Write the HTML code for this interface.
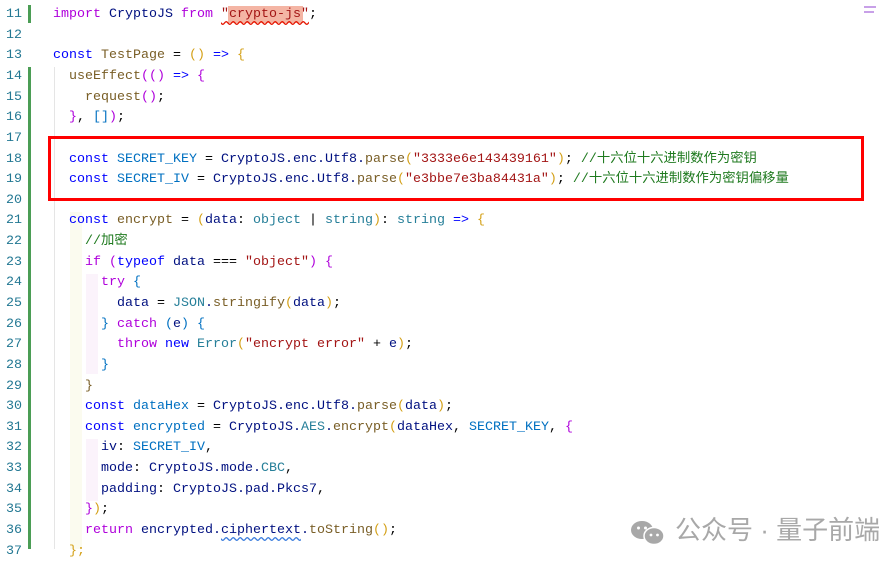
<!DOCTYPE html>
<html><head><meta charset="utf-8"><style>
body{margin:0;width:882px;height:547px;background:#fff;overflow:hidden;position:relative;font-family:"Liberation Mono","Noto Sans CJK SC",monospace;font-size:13.33px}
.l{position:absolute;left:0;height:20.64px;line-height:20.64px;white-space:pre;width:882px}
.n{position:absolute;left:0;width:22px;text-align:right;color:#237893}
.c{position:absolute;left:53px;color:#001080}
.k{color:#0000ff}.p{color:#af00db}.s{color:#a31515}.f{color:#795e26}.t{color:#000}.y{color:#d4a017}.g{color:#1f7a1f}.m{color:#267f99}.b{color:#0431fa}.tc{color:#0070c1}
.bar{position:absolute;left:28px;width:3px;background:#4b9d55}
.sq{text-decoration:underline wavy #e51400;text-underline-offset:3px}
.sqb{text-decoration:underline wavy #3b7ddd;text-underline-offset:3px}
#w{position:absolute;top:2px;left:0;width:882px;height:547px}
</style></head><body>
<div id="w">
<div class="bar" style="top:3px;height:18px"></div>
<div class="bar" style="top:65px;height:482px"></div>
<div style="position:absolute;left:54px;top:65px;width:1px;height:482px;background:#e5e5e5"></div>
<div style="position:absolute;left:70px;top:210px;width:12px;height:337px;background:#fbfbef"></div>
<div style="position:absolute;left:86px;top:272px;width:12px;height:100px;background:#fbf3fb"></div>
<div style="position:absolute;left:86px;top:437px;width:12px;height:62px;background:#fbf3fb"></div>
<div style="position:absolute;left:48px;top:134px;width:810px;height:59px;border:3px solid #f00"></div>
<div style="position:absolute;left:228px;top:4px;width:75px;height:17px;background:#f4b5a4"></div>

<div class="l" style="top:3px"><span class="n">11</span><span class="c"><span class="p">import</span> CryptoJS <span class="p">from</span> <span class="s sq">"crypto-js"</span><span class="t">;</span></span></div>
<div class="l" style="top:23.6px"><span class="n">12</span></div>
<div class="l" style="top:44.3px"><span class="n">13</span><span class="c"><span class="k">const</span> <span class="f">TestPage</span> <span class="t">=</span> <span class="y">()</span> <span class="k">=&gt;</span> <span class="y">{</span></span></div>
<div class="l" style="top:64.9px"><span class="n">14</span><span class="c">  <span class="f">useEffect</span><span class="p">(()</span> <span class="k">=&gt;</span> <span class="p">{</span></span></div>
<div class="l" style="top:85.6px"><span class="n">15</span><span class="c">    <span class="f">request</span><span class="p">()</span><span class="t">;</span></span></div>
<div class="l" style="top:106.2px"><span class="n">16</span><span class="c">  <span class="p">}</span><span class="t">,</span> <span class="tc">[]</span><span class="p">)</span><span class="t">;</span></span></div>
<div class="l" style="top:126.8px"><span class="n">17</span></div>
<div class="l" style="top:147.5px"><span class="n">18</span><span class="c">  <span class="k">const</span> <span class="tc">SECRET_KEY</span> <span class="t">=</span> CryptoJS.enc.Utf8.<span class="f">parse</span><span class="y">(</span><span class="s">"3333e6e143439161"</span><span class="y">)</span><span class="t">;</span> <span class="g">//十六位十六进制数作为密钥</span></span></div>
<div class="l" style="top:168.1px"><span class="n">19</span><span class="c">  <span class="k">const</span> <span class="tc">SECRET_IV</span> <span class="t">=</span> CryptoJS.enc.Utf8.<span class="f">parse</span><span class="y">(</span><span class="s">"e3bbe7e3ba84431a"</span><span class="y">)</span><span class="t">;</span> <span class="g">//十六位十六进制数作为密钥偏移量</span></span></div>
<div class="l" style="top:188.8px"><span class="n">20</span></div>
<div class="l" style="top:209.4px"><span class="n">21</span><span class="c">  <span class="k">const</span> <span class="f">encrypt</span> <span class="t">=</span> <span class="y">(</span>data<span class="t">:</span> <span class="m">object</span> <span class="t">|</span> <span class="m">string</span><span class="y">)</span><span class="t">:</span> <span class="m">string</span> <span class="k">=&gt;</span> <span class="y">{</span></span></div>
<div class="l" style="top:230px"><span class="n">22</span><span class="c">    <span class="g">//加密</span></span></div>
<div class="l" style="top:250.7px"><span class="n">23</span><span class="c">    <span class="p">if</span> <span class="p">(</span><span class="k">typeof</span> data <span class="t">===</span> <span class="s">"object"</span><span class="p">)</span> <span class="p">{</span></span></div>
<div class="l" style="top:271.3px"><span class="n">24</span><span class="c">      <span class="p">try</span> <span class="tc">{</span></span></div>
<div class="l" style="top:292px"><span class="n">25</span><span class="c">        data <span class="t">=</span> <span class="m">JSON</span>.<span class="f">stringify</span><span class="y">(</span>data<span class="y">)</span><span class="t">;</span></span></div>
<div class="l" style="top:312.6px"><span class="n">26</span><span class="c">      <span class="tc">}</span> <span class="p">catch</span> <span class="tc">(</span>e<span class="tc">)</span> <span class="tc">{</span></span></div>
<div class="l" style="top:333.2px"><span class="n">27</span><span class="c">        <span class="p">throw</span> <span class="k">new</span> <span class="m">Error</span><span class="y">(</span><span class="s">"encrypt error"</span> <span class="t">+</span> e<span class="y">)</span><span class="t">;</span></span></div>
<div class="l" style="top:353.9px"><span class="n">28</span><span class="c">      <span class="tc">}</span></span></div>
<div class="l" style="top:374.5px"><span class="n">29</span><span class="c">    <span class="f">}</span></span></div>
<div class="l" style="top:395.2px"><span class="n">30</span><span class="c">    <span class="k">const</span> <span class="tc">dataHex</span> <span class="t">=</span> CryptoJS.enc.Utf8.<span class="f">parse</span><span class="y">(</span>data<span class="y">)</span><span class="t">;</span></span></div>
<div class="l" style="top:415.8px"><span class="n">31</span><span class="c">    <span class="k">const</span> <span class="tc">encrypted</span> <span class="t">=</span> CryptoJS.<span class="m">AES</span>.<span class="f">encrypt</span><span class="y">(</span>dataHex<span class="t">,</span> <span class="tc">SECRET_KEY</span><span class="t">,</span> <span class="p">{</span></span></div>
<div class="l" style="top:436.4px"><span class="n">32</span><span class="c">      iv<span class="t">:</span> <span class="tc">SECRET_IV</span><span class="t">,</span></span></div>
<div class="l" style="top:457.1px"><span class="n">33</span><span class="c">      mode<span class="t">:</span> CryptoJS.mode.<span class="m">CBC</span><span class="t">,</span></span></div>
<div class="l" style="top:477.7px"><span class="n">34</span><span class="c">      padding<span class="t">:</span> CryptoJS.pad.Pkcs7<span class="t">,</span></span></div>
<div class="l" style="top:498.4px"><span class="n">35</span><span class="c">    <span class="p">}</span><span class="y">)</span><span class="t">;</span></span></div>
<div class="l" style="top:519px"><span class="n">36</span><span class="c">    <span class="p">return</span> encrypted.<span class="sqb">ciphertext</span>.<span class="f">toString</span><span class="y">()</span><span class="t">;</span></span></div>
<div class="l" style="top:539.6px"><span class="n">37</span><span class="c">  <span class="y">};</span></span></div>
<div style="position:absolute;left:864px;top:4px;width:12px;height:2px;background:#c8a0e8"></div>
<div style="position:absolute;left:864px;top:9px;width:10px;height:2px;background:#c8a0e8"></div>
</div>
<div style="position:absolute;left:625px;top:514px;height:33px;background:rgba(255,255,255,0.85);width:257px"></div>
<svg style="position:absolute;left:630px;top:520px" width="38" height="26" viewBox="0 0 38 26"><ellipse cx="12" cy="10" rx="11" ry="9" fill="#a8a8a8"/><ellipse cx="24" cy="16" rx="10" ry="8.5" fill="#a8a8a8" stroke="#fff" stroke-width="1.5"/><circle cx="8.5" cy="8" r="1.5" fill="#fff"/><circle cx="15.5" cy="8" r="1.5" fill="#fff"/><circle cx="21" cy="15" r="1.4" fill="#fff"/><circle cx="27.5" cy="15" r="1.4" fill="#fff"/></svg>
<div style="position:absolute;left:675px;top:514px;font-family:'Liberation Sans','Noto Sans CJK SC',sans-serif;font-size:26px;color:#a8a8a8;white-space:nowrap;line-height:33px">公众号 · 量子前端</div>
</body></html>
